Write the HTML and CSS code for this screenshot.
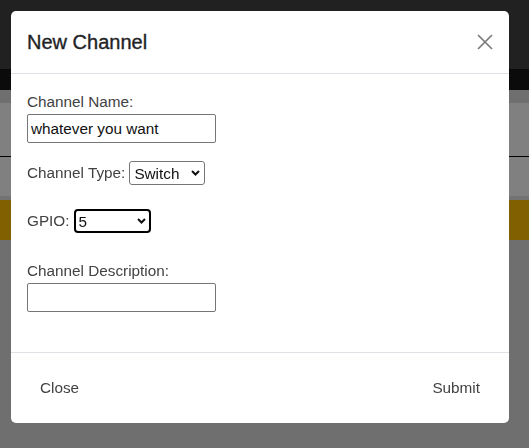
FILE: index.html
```html
<!DOCTYPE html>
<html lang="en">
<head>
<meta charset="utf-8">
<title>New Channel</title>
<link rel="stylesheet" href="styles.css">
</head>
<body>
<div class="page">
  <div class="nav"></div>
  <div class="strip"></div>
  <div class="band band-a"></div>
  <div class="band band-b"></div>
  <div class="rule"></div>
  <div class="band band-c"></div>
  <div class="band band-d"></div>
  <div class="alert"></div>
</div>

<div class="modal">
  <div class="modal-header">
    <h5 class="modal-title">New Channel</h5>
    <button class="btn-close" type="button" aria-label="Close">
      <svg width="16" height="16" viewBox="0 0 16 16"><path d="M1 1L15 15M15 1L1 15" stroke="#7b7b7b" stroke-width="1.7" fill="none"/></svg>
    </button>
  </div>
  <div class="modal-body">
    <div class="field">
      <label class="label" for="cname">Channel Name:</label>
      <input class="text-input" id="cname" type="text" value="whatever you want">
    </div>
    <div class="row row-type">
      <label class="label" for="ctype">Channel Type:</label>
      <span class="select-wrap">
        <select class="select select-type" id="ctype"><option>Switch</option></select>
        <svg class="chev" width="9" height="6" viewBox="0 0 9 6"><path d="M1 1L4.5 4.5L8 1" stroke="#111" stroke-width="2" fill="none"/></svg>
      </span>
    </div>
    <div class="row row-gpio">
      <label class="label" for="gpio">GPIO:</label>
      <span class="select-wrap">
        <select class="select select-gpio" id="gpio"><option>5</option></select>
        <svg class="chev" width="9" height="6" viewBox="0 0 9 6"><path d="M1 1L4.5 4.5L8 1" stroke="#111" stroke-width="2" fill="none"/></svg>
      </span>
    </div>
    <div class="field field-desc">
      <label class="label" for="cdesc">Channel Description:</label>
      <input class="text-input" id="cdesc" type="text" value="">
    </div>
  </div>
  <div class="modal-footer">
    <button class="btn" type="button">Close</button>
    <button class="btn" type="button">Submit</button>
  </div>
</div>
</body>
</html>
```

FILE: styles.css
```css
html, body {
  margin: 0;
  padding: 0;
}
body {
  background: #6f6f6f;
  font-family: "Liberation Sans", Arial, sans-serif;
  width: 529px;
  height: 448px;
  overflow: hidden;
}
.page {
  display: flex;
  flex-direction: column;
}
.nav { height: 69px; background: #212121; }
.strip { height: 21px; background: #0b0b0b; }
.band-a { height: 13px; background: #6f6f6f; }
.band-b { height: 53px; background: #808080; }
.rule { height: 1px; background: #000; }
.band-c { height: 39px; background: #808080; }
.band-d { height: 4px; background: #737373; }
.alert { height: 40px; background: #806000; }

.modal {
  position: fixed;
  top: 11px;
  left: 11px;
  width: 498px;
  height: 412px;
  box-sizing: border-box;
  background: #fff;
  border-radius: 5px;
  display: flex;
  flex-direction: column;
}
.modal-header {
  height: 63px;
  flex: none;
  box-sizing: border-box;
  padding: 0 16px;
  display: flex;
  align-items: center;
  justify-content: space-between;
  border-bottom: 1px solid #dee2e6;
}
.modal-title {
  margin: 0;
  font-size: 20px;
  font-weight: 400;
  color: #1f2326;
  line-height: 30px;
  -webkit-text-stroke: 0.35px #1f2326;
}
.btn-close {
  border: 0;
  background: none;
  padding: 0;
  width: 16px;
  height: 16px;
  display: flex;
}
.modal-body {
  flex: 1;
  padding: 16px 16px 0 16px;
}
.label {
  font-size: 15.3px;
  line-height: 24px;
  color: #424242;
}
.field .label {
  display: block;
}
.text-input {
  display: block;
  box-sizing: border-box;
  width: 189px;
  height: 29px;
  margin: 0;
  padding: 0 3px;
  border: 1px solid #767676;
  border-radius: 2px;
  font-family: "Liberation Sans", Arial, sans-serif;
  font-size: 15.3px;
  color: #111;
  background: #fff;
}
.row {
  display: flex;
  align-items: center;
  gap: 4px;
  height: 24px;
}
.row-type { margin-top: 18px; }
.row-gpio { margin-top: 24px; }
.field-desc { margin-top: 26px; }
.select-wrap {
  position: relative;
  display: flex;
}
.select {
  appearance: none;
  -webkit-appearance: none;
  box-sizing: border-box;
  height: 24px;
  margin: 0;
  padding: 0 0 0 4px;
  background: #fff;
  font-family: "Liberation Sans", Arial, sans-serif;
  font-size: 15.3px;
  color: #111;
}
.select-type {
  width: 76px;
  border: 1px solid #767676;
  border-radius: 3px;
}
.select-gpio {
  width: 77px;
  border: 2px solid #000;
  border-radius: 4px;
  padding-left: 3px;
}
.chev {
  position: absolute;
  right: 5px;
  top: 9px;
  pointer-events: none;
}
.modal-footer {
  height: 71px;
  flex: none;
  box-sizing: border-box;
  border-top: 1px solid #dee2e6;
  padding: 0 16px;
  display: flex;
  align-items: center;
  justify-content: space-between;
}
.btn {
  border: 1px solid transparent;
  background: none;
  padding: 6px 12px;
  font-family: "Liberation Sans", Arial, sans-serif;
  font-size: 15.3px;
  line-height: 24px;
  color: #424242;
}
```
